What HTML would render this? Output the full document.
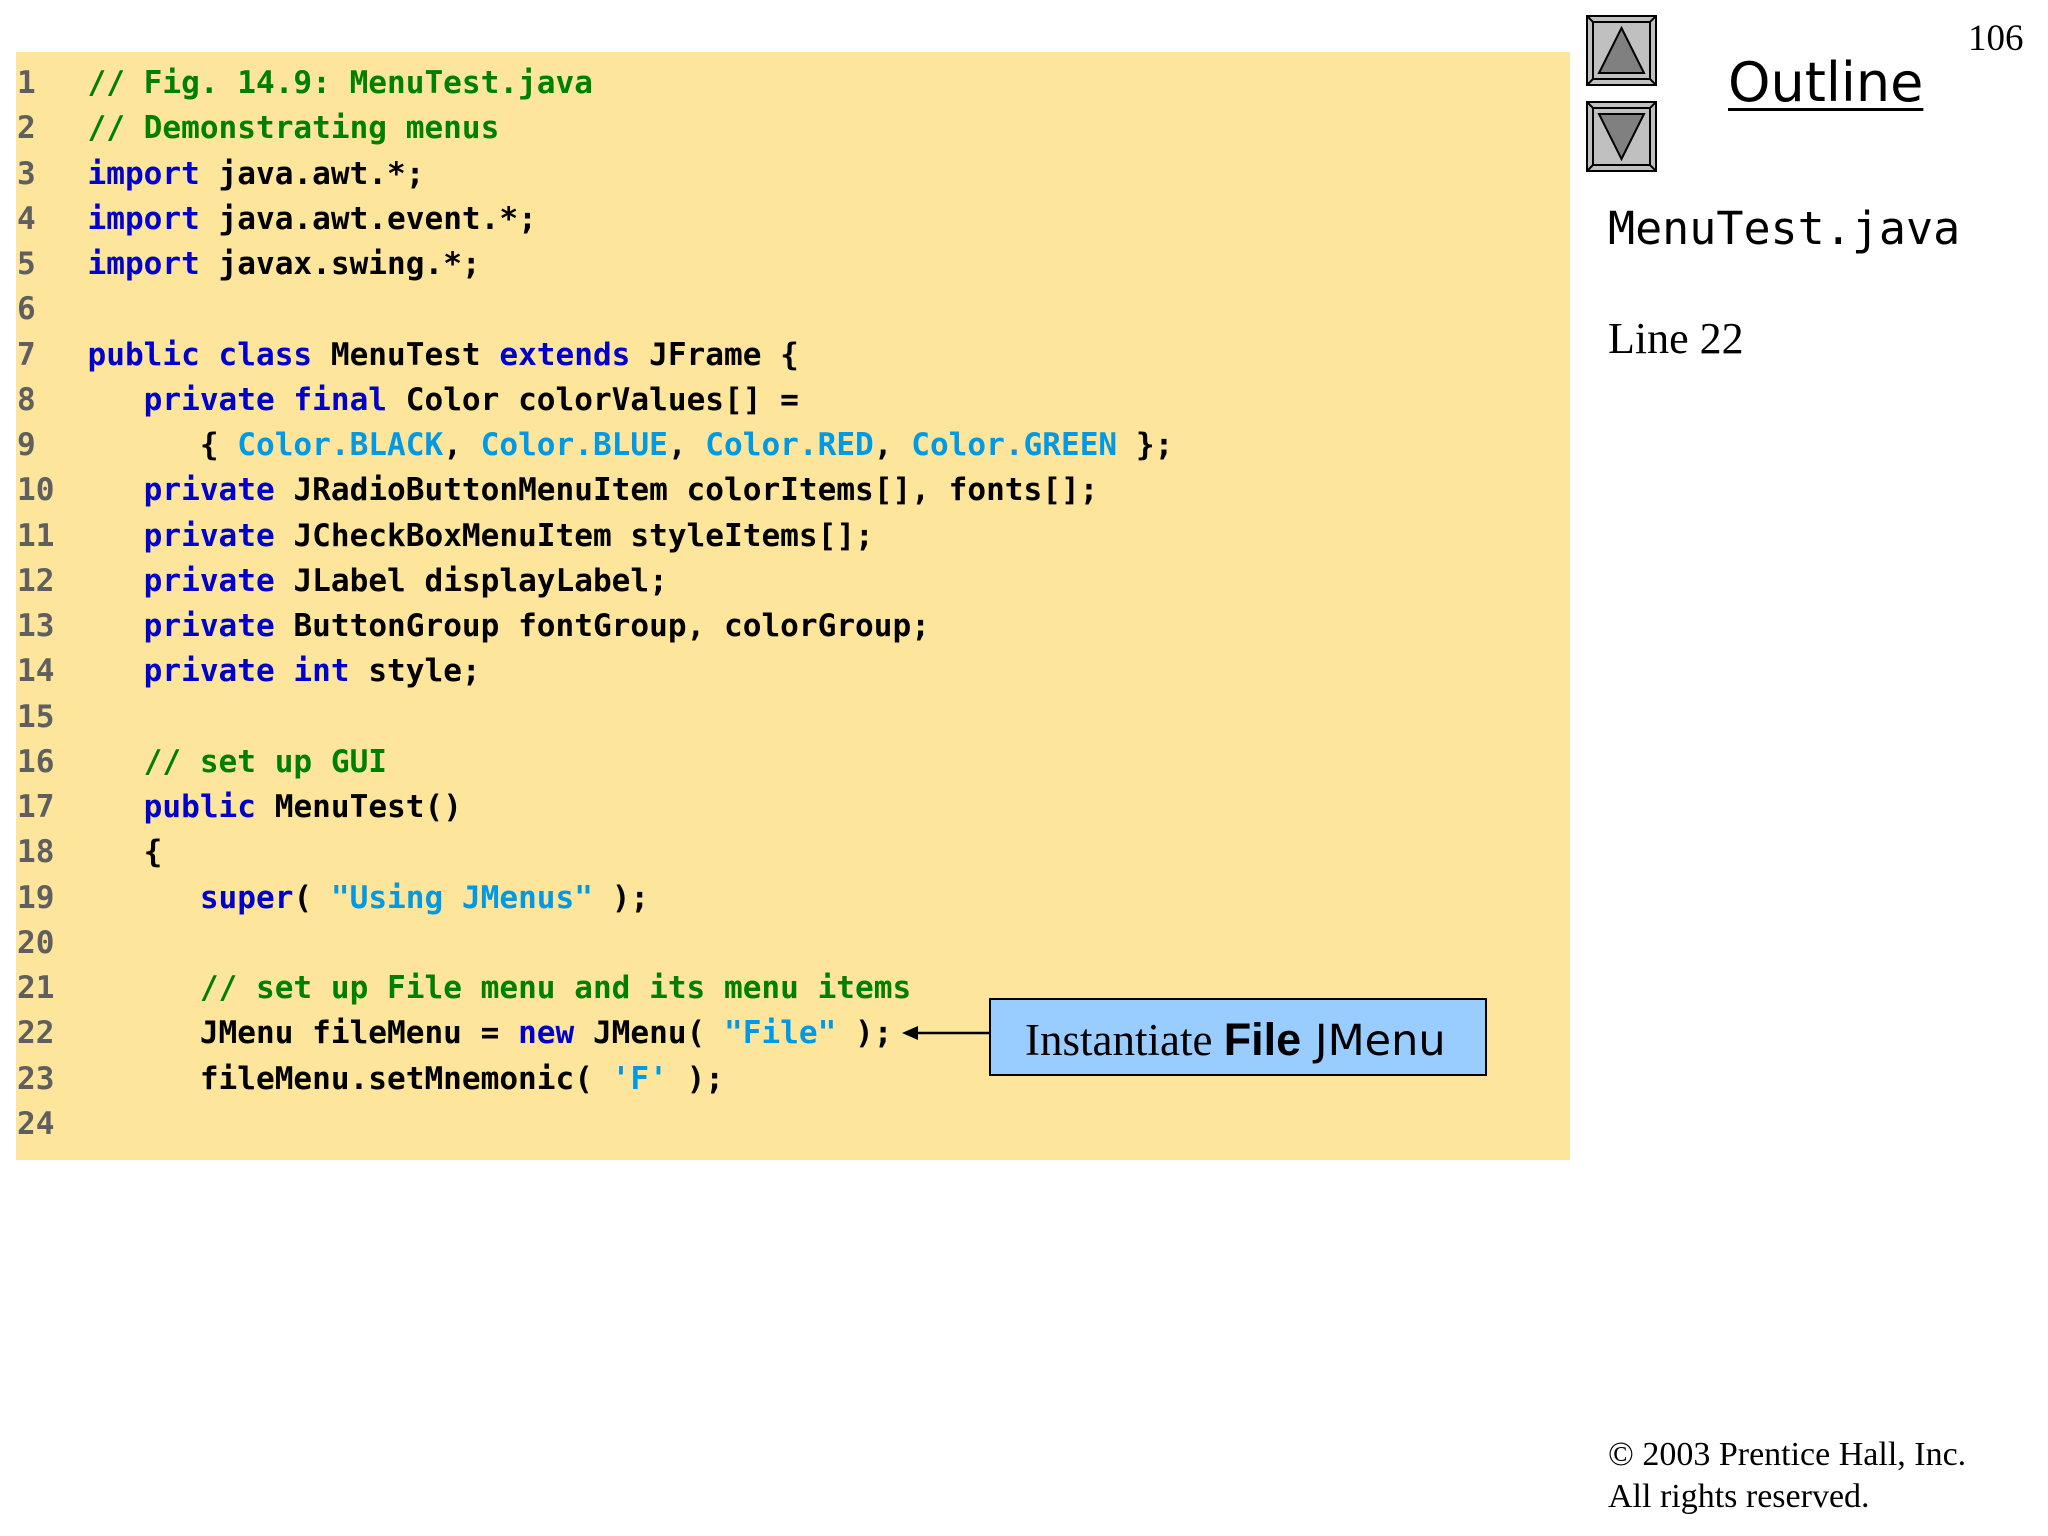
<!DOCTYPE html>
<html><head><meta charset="utf-8"><style>
body{margin:0;width:2048px;height:1536px;background:#fff;position:relative;overflow:hidden}
.a{position:absolute;white-space:pre;line-height:1}
pre{position:absolute;margin:0;font-family:"DejaVu Sans Mono","Liberation Mono",monospace;font-weight:bold;font-size:31.1px;line-height:45.25px}
.c{color:#008000}.k{color:#0000cc}.s{color:#0099e6}
</style></head><body>
<div style="position:absolute;left:16px;top:52px;width:1554px;height:1108px;background:#fde59b"></div>
<pre style="left:17px;top:61px;color:#5f5f5f">1
2
3
4
5
6
7
8
9
10
11
12
13
14
15
16
17
18
19
20
21
22
23
24</pre>
<pre style="left:87.5px;top:61px;color:#000"><span class="c">// Fig. 14.9: MenuTest.java</span>
<span class="c">// Demonstrating menus</span>
<span class="k">import</span> java.awt.*;
<span class="k">import</span> java.awt.event.*;
<span class="k">import</span> javax.swing.*;

<span class="k">public class</span> MenuTest <span class="k">extends</span> JFrame {
   <span class="k">private final</span> Color colorValues[] =
      { <span class="s">Color.BLACK</span>, <span class="s">Color.BLUE</span>, <span class="s">Color.RED</span>, <span class="s">Color.GREEN</span> };
   <span class="k">private</span> JRadioButtonMenuItem colorItems[], fonts[];
   <span class="k">private</span> JCheckBoxMenuItem styleItems[];
   <span class="k">private</span> JLabel displayLabel;
   <span class="k">private</span> ButtonGroup fontGroup, colorGroup;
   <span class="k">private int</span> style;

   <span class="c">// set up GUI</span>
   <span class="k">public</span> MenuTest()
   {
      <span class="k">super</span>( <span class="s">"Using JMenus"</span> );

      <span class="c">// set up File menu and its menu items</span>
      JMenu fileMenu = <span class="k">new</span> JMenu( <span class="s">"File"</span> );
      fileMenu.setMnemonic( <span class="s">'F'</span> );
</pre>
<svg style="position:absolute;left:902px;top:1022px" width="90" height="22"><line x1="12" y1="11" x2="90" y2="11" stroke="#000" stroke-width="2.5"/><polygon points="0,11 16,4 16,18" fill="#000"/></svg>
<div style="position:absolute;left:989px;top:998px;width:494px;height:74px;background:#99ccff;border:2px solid #000"></div>
<div class="a" style="left:1025px;top:1017px;font-size:45px"><span style="font-family:'Liberation Serif',serif">Instantiate </span><span style="font-family:'Liberation Sans',sans-serif;font-weight:bold">File</span><span style="font-family:'DejaVu Sans',sans-serif;font-size:43px"> JMenu</span></div>
<svg style="position:absolute;left:1586px;top:15px" width="72" height="158">
<g stroke="#000" stroke-width="2"><rect x="1" y="1" width="69" height="69" fill="#c0c0c0"/><rect x="7" y="7" width="57" height="57" fill="#c0c0c0"/><line x1="1" y1="1" x2="7" y2="7"/><line x1="70" y1="1" x2="64" y2="7"/><line x1="1" y1="70" x2="7" y2="64"/><line x1="70" y1="70" x2="64" y2="64"/>
<polygon points="35.5,13 58,58 13,58" fill="#808080"/>
<rect x="1" y="87" width="69" height="69" fill="#c0c0c0"/><rect x="7" y="93" width="57" height="57" fill="#c0c0c0"/><line x1="1" y1="87" x2="7" y2="93"/><line x1="70" y1="87" x2="64" y2="93"/><line x1="1" y1="156" x2="7" y2="150"/><line x1="70" y1="156" x2="64" y2="150"/>
<polygon points="13,99 58,99 35.5,144" fill="#808080"/></g></svg>
<div class="a" style="left:1728px;top:56px;font-family:'DejaVu Sans','Liberation Sans',sans-serif;font-size:54px;text-decoration:underline;text-decoration-thickness:3px;text-underline-offset:7px">Outline</div>
<div class="a" style="left:1968px;top:20px;font-family:'Liberation Serif',serif;font-size:37px">106</div>
<div class="a" style="left:1608px;top:206px;font-family:'DejaVu Sans Mono',monospace;font-size:45px">MenuTest.java</div>
<div class="a" style="left:1608px;top:317px;font-family:'Liberation Serif',serif;font-size:44px">Line 22</div>
<div class="a" style="left:1608px;top:1438px;font-family:'Liberation Serif',serif;font-size:34px">© 2003 Prentice Hall, Inc.</div>
<div class="a" style="left:1608px;top:1480px;font-family:'Liberation Serif',serif;font-size:34px">All rights reserved.</div>
</body></html>
